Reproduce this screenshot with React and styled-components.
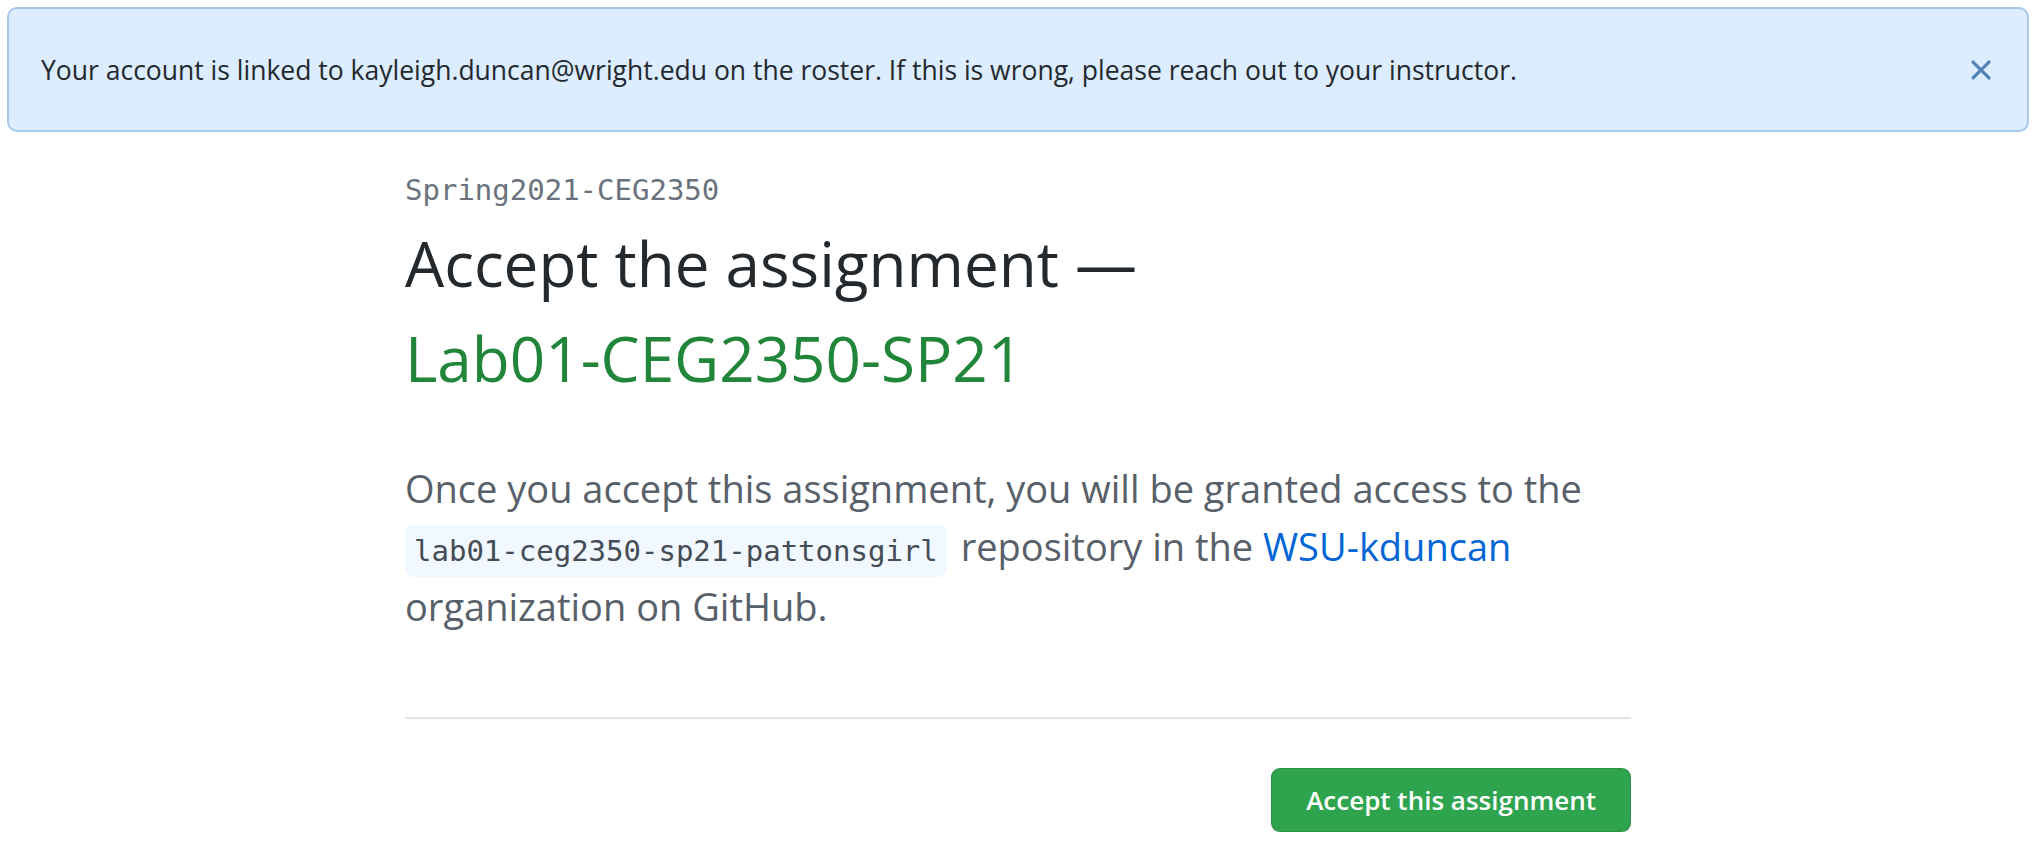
import React, { useState } from 'react'
import styled, { createGlobalStyle } from 'styled-components'

const GlobalStyle = createGlobalStyle`
  html, body {
    margin: 0;
    padding: 0;
    background: #ffffff;
  }
  body {
    font-family: "Open Sans", "Noto Sans", sans-serif;
    color: #24292e;
  }
`

const Page = styled.div`
  padding: 7px 11px 0 7px;
`

const Flash = styled.div`
  display: flex;
  align-items: center;
  justify-content: space-between;
  height: 125px;
  box-sizing: border-box;
  padding: 0 29px 0 32px;
  background-color: #dbedff;
  border: 2px solid #a8c9ea;
  border-radius: 10px;
  font-size: 26.5px;
  color: #24292e;
`

const CloseButton = styled.button`
  display: flex;
  align-items: center;
  justify-content: center;
  width: 34px;
  height: 34px;
  padding: 0;
  border: 0;
  background: transparent;
  color: #5282b6;
  cursor: pointer;
`

const Container = styled.main`
  width: 1226px;
  margin: 0 auto;
`

const Classroom = styled.div`
  margin-top: 38px;
  font-family: "DejaVu Sans Mono", "Liberation Mono", monospace;
  font-size: 29px;
  line-height: 40px;
  color: #6a737d;
`

const Title = styled.h1`
  margin: 6px 0 0;
  font-size: 62px;
  font-weight: 400;
  line-height: 95px;
  color: #24292e;
`

const AssignmentName = styled.span`
  color: #22863a;
`

const Description = styled.p`
  margin: 53px 0 0;
  font-size: 38px;
  line-height: 58px;
  color: #586069;
`

const RepoName = styled.code`
  display: inline-block;
  padding: 0 9px;
  margin-right: 4px;
  line-height: 52px;
  font-family: "DejaVu Sans Mono", "Liberation Mono", monospace;
  font-size: 29px;
  color: #444d56;
  background-color: #f1f8ff;
  border-radius: 8px;
`

const OrgLink = styled.a`
  color: #0366d6;
  text-decoration: none;
`

const Divider = styled.hr`
  margin: 82px 0 0;
  border: 0;
  border-top: 2px solid #e1e4e8;
`

const Actions = styled.div`
  display: flex;
  justify-content: flex-end;
  margin-top: 49px;
`

const AcceptButton = styled.button`
  height: 64px;
  padding: 0 34px;
  font-family: "Open Sans", "Noto Sans", sans-serif;
  font-size: 26px;
  font-weight: 600;
  color: #ffffff;
  background-color: #2ea44f;
  border: 1px solid rgba(27, 31, 35, 0.15);
  border-radius: 9px;
  box-shadow: 0 1px 0 rgba(27, 31, 35, 0.1);
  cursor: pointer;
`

export default function App() {
  const [showFlash, setShowFlash] = useState(true)

  return (
    <>
      <GlobalStyle />
      <Page>
        {showFlash && (
          <Flash>
            <span>
              Your account is linked to kayleigh.duncan@wright.edu on the roster. If this is wrong, please reach out to your instructor.
            </span>
            <CloseButton aria-label="Dismiss" onClick={() => setShowFlash(false)}>
              <svg width="34" height="34" viewBox="0 0 16 16" fill="currentColor">
                <path d="M3.72 3.72a.75.75 0 011.06 0L8 6.94l3.22-3.22a.75.75 0 111.06 1.06L9.06 8l3.22 3.22a.75.75 0 11-1.06 1.06L8 9.06l-3.22 3.22a.75.75 0 01-1.06-1.06L6.94 8 3.72 4.78a.75.75 0 010-1.06z" />
              </svg>
            </CloseButton>
          </Flash>
        )}
        <Container>
          <Classroom>Spring2021-CEG2350</Classroom>
          <Title>
            Accept the assignment —<br />
            <AssignmentName>Lab01-CEG2350-SP21</AssignmentName>
          </Title>
          <Description>
            Once you accept this assignment, you will be granted access to the{' '}
            <RepoName>lab01-ceg2350-sp21-pattonsgirl</RepoName> repository in the{' '}
            <OrgLink href="#">WSU-kduncan</OrgLink> organization on GitHub.
          </Description>
          <Divider />
          <Actions>
            <AcceptButton>Accept this assignment</AcceptButton>
          </Actions>
        </Container>
      </Page>
    </>
  )
}
